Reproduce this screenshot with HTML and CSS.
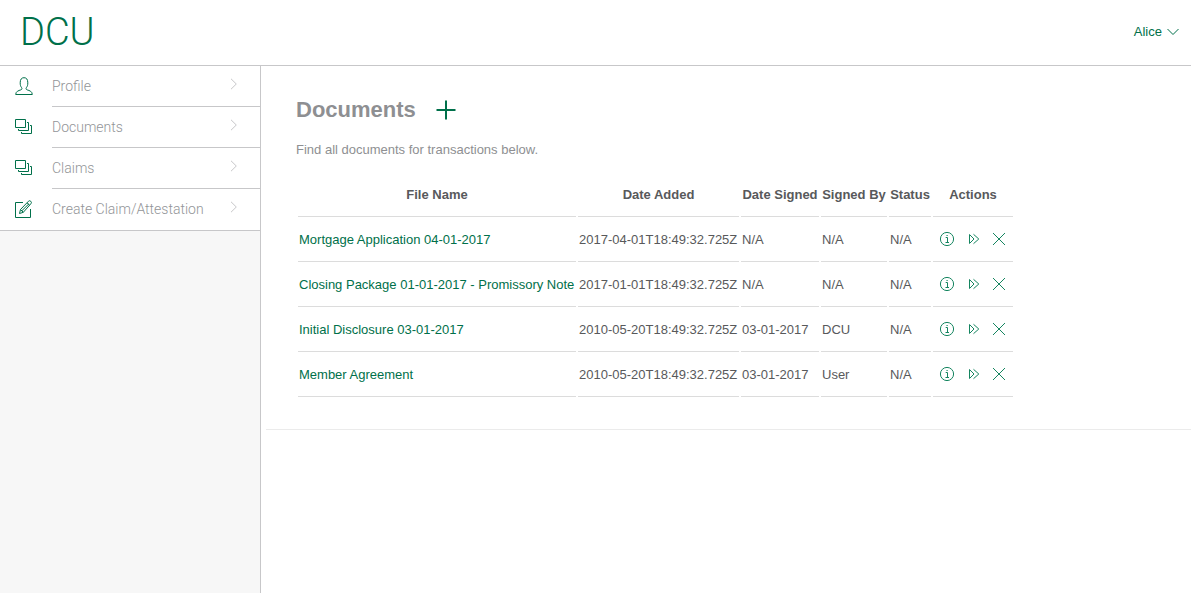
FILE: index.html
```html
<!DOCTYPE html>
<html lang="en">
<head>
<meta charset="utf-8">
<title>DCU - Documents</title>
<link rel="stylesheet" href="styles.css">
</head>
<body>
<svg class="sprite" aria-hidden="true">
  <symbol id="user" viewBox="0 0 18 18"><path d="M.7 17.500h16.600c0-3-2.800-4-5.100-4.600-1.400-.4-1.300-1.700-.8-2.300 1-1.200 1.400-2.500 1.400-4.800 0-3.300-1.200-5.100-3.800-5.100S5.200 2.500 5.200 5.800c0 2.300.4 3.600 1.400 4.800.5.600.6 1.900-.8 2.300-2.300.6-5.100 1.600-5.100 4.600z"/></symbol>
  <symbol id="stack" viewBox="0 0 18 18"><path d="M.5 1.500h10v8H.5zM12 4.500h1.500v8h-10V11M15 7.500h1.500v8h-10V14"/></symbol>
  <symbol id="compose" viewBox="0 0 18 18"><path d="M8 2.500H.5v15h15V9M4.500 13.500l1-4L13.500 1.200q1-1 2.300.1 1.200 1.200.1 2.400L8.300 12.300zM5.500 9.500l2.800 2.800M12 2.800l2.700 2.500M6.800 10.800L14 3.700"/></symbol>
  <symbol id="chevron" viewBox="0 0 8 12"><path d="M1 .8L6.300 6 1 11.200"/></symbol>
  <symbol id="down" viewBox="0 0 14 8"><path d="M1.500 1L7 6.500 12.500 1"/></symbol>
  <symbol id="info" viewBox="0 0 16 16"><circle cx="8" cy="8" r="6.600"/><path d="M6.700 6.500h1.800v5M6.500 11.500h3.500M7.500 4.500h1.200"/></symbol>
  <symbol id="forward" viewBox="0 0 12 12"><path d="M1.500 1.500v9L6 6zM5.500 1.300L10.800 6 5.500 10.700"/></symbol>
  <symbol id="close" viewBox="0 0 14 14"><path d="M1 1l12 12M13 1L1 13"/></symbol>
  <symbol id="plus" viewBox="0 0 20 20"><path d="M10 .5v19M.5 10h19"/></symbol>
</svg>

<header class="header">
  <a class="logo" href="#">DCU</a>
  <button class="account" type="button">Alice <svg class="icon-down"><use href="#down"/></svg></button>
</header>

<div class="layout">
  <aside class="sidebar">
    <nav class="menu">
      <a class="menu-item" href="#"><svg class="menu-icon"><use href="#user"/></svg><span class="menu-label">Profile<svg class="chevron"><use href="#chevron"/></svg></span></a>
      <a class="menu-item" href="#"><svg class="menu-icon"><use href="#stack"/></svg><span class="menu-label">Documents<svg class="chevron"><use href="#chevron"/></svg></span></a>
      <a class="menu-item" href="#"><svg class="menu-icon"><use href="#stack"/></svg><span class="menu-label">Claims<svg class="chevron"><use href="#chevron"/></svg></span></a>
      <a class="menu-item" href="#"><svg class="menu-icon"><use href="#compose"/></svg><span class="menu-label">Create Claim/Attestation<svg class="chevron"><use href="#chevron"/></svg></span></a>
    </nav>
  </aside>

  <main class="main">
    <section class="panel">
      <div class="title-row">
        <h1 class="title">Documents</h1>
        <button class="add" type="button" aria-label="Add document"><svg class="icon-plus"><use href="#plus"/></svg></button>
      </div>
      <p class="intro">Find all documents for transactions below.</p>
      <table class="documents">
        <colgroup><col class="col-name"><col class="col-added"><col class="col-signed"><col class="col-by"><col class="col-status"><col class="col-actions"></colgroup>
        <thead>
          <tr><th>File Name</th><th>Date Added</th><th>Date Signed</th><th>Signed By</th><th>Status</th><th>Actions</th></tr>
        </thead>
        <tbody>
          <tr>
            <td><a href="#">Mortgage Application 04-01-2017</a></td><td>2017-04-01T18:49:32.725Z</td><td>N/A</td><td>N/A</td><td>N/A</td>
            <td><div class="actions"><button type="button" aria-label="Info"><svg class="icon-info"><use href="#info"/></svg></button><button type="button" aria-label="Forward"><svg class="icon-forward"><use href="#forward"/></svg></button><button type="button" aria-label="Delete"><svg class="icon-close"><use href="#close"/></svg></button></div></td>
          </tr>
          <tr>
            <td><a href="#">Closing Package 01-01-2017 - Promissory Note</a></td><td>2017-01-01T18:49:32.725Z</td><td>N/A</td><td>N/A</td><td>N/A</td>
            <td><div class="actions"><button type="button" aria-label="Info"><svg class="icon-info"><use href="#info"/></svg></button><button type="button" aria-label="Forward"><svg class="icon-forward"><use href="#forward"/></svg></button><button type="button" aria-label="Delete"><svg class="icon-close"><use href="#close"/></svg></button></div></td>
          </tr>
          <tr>
            <td><a href="#">Initial Disclosure 03-01-2017</a></td><td>2010-05-20T18:49:32.725Z</td><td>03-01-2017</td><td>DCU</td><td>N/A</td>
            <td><div class="actions"><button type="button" aria-label="Info"><svg class="icon-info"><use href="#info"/></svg></button><button type="button" aria-label="Forward"><svg class="icon-forward"><use href="#forward"/></svg></button><button type="button" aria-label="Delete"><svg class="icon-close"><use href="#close"/></svg></button></div></td>
          </tr>
          <tr>
            <td><a href="#">Member Agreement</a></td><td>2010-05-20T18:49:32.725Z</td><td>03-01-2017</td><td>User</td><td>N/A</td>
            <td><div class="actions"><button type="button" aria-label="Info"><svg class="icon-info"><use href="#info"/></svg></button><button type="button" aria-label="Forward"><svg class="icon-forward"><use href="#forward"/></svg></button><button type="button" aria-label="Delete"><svg class="icon-close"><use href="#close"/></svg></button></div></td>
          </tr>
        </tbody>
      </table>
    </section>
  </main>
</div>
</body>
</html>
```

FILE: styles.css
```css
* {
  box-sizing: border-box;
}

body {
  margin: 0;
  min-height: 100vh;
  display: flex;
  flex-direction: column;
  background: #fff;
  color: #58595b;
  font: 13px/16px "Liberation Sans", Arial, sans-serif;
}

a {
  color: #00704a;
  text-decoration: none;
}

button {
  display: flex;
  align-items: center;
  padding: 0;
  border: 0;
  background: none;
  color: #00704a;
  font: inherit;
  cursor: pointer;
}

svg {
  flex: none;
  fill: none;
  stroke: currentColor;
}

.sprite {
  display: none;
}

.header {
  display: flex;
  justify-content: space-between;
  align-items: center;
  padding: 8px 11px 9px 20px;
  border-bottom: 1px solid #c7c7c9;
}

.logo {
  font: 300 38px/48px Roboto, "Liberation Sans", sans-serif;
}

.account {
  gap: 4px;
}

.icon-down {
  width: 14px;
  height: 8px;
}

.layout {
  flex: 1;
  display: flex;
}

.sidebar {
  flex: none;
  width: 261px;
  border-right: 1px solid #c7c7c9;
  background: #f7f7f7;
}

.menu {
  padding-bottom: 1px;
  border-bottom: 1px solid #c7c7c9;
  background: #fff;
}

.menu-item {
  display: flex;
  gap: 19px;
  padding-left: 15px;
  color: #939598;
  font: 300 14px/20px Roboto, "Liberation Sans", sans-serif;
}

.menu-icon {
  width: 18px;
  height: 18px;
  margin-top: 11px;
  color: #00704a;
}

.menu-label {
  flex: 1;
  display: flex;
  justify-content: space-between;
  padding: 10px 22px 10px 0;
  border-bottom: 1px solid #c7c7c9;
}

.menu-item:last-child .menu-label {
  border-bottom: 0;
}

.chevron {
  width: 8px;
  height: 12px;
  margin-top: 2px;
  color: #c7c7c9;
}

.main {
  flex: 1;
  min-width: 0;
  padding-left: 5px;
}

.panel {
  padding: 32px 30px 30px;
  border-bottom: 1px solid #ebebeb;
}

.title-row {
  display: flex;
  align-items: center;
  gap: 20px;
}

.title {
  margin: 0;
  color: #8e8f92;
  font-size: 22px;
  line-height: 24px;
}

.icon-plus {
  width: 20px;
  height: 20px;
  stroke-width: 2;
}

.intro {
  margin: 20px 0 14px;
  color: #8e8f92;
}

.documents {
  border-spacing: 2px;
  white-space: nowrap;
}

.documents th,
.documents td {
  height: 43px;
  padding: 1px;
  border-bottom: 1px solid #dcdcdc;
}

.col-name {
  width: 278px;
}

.col-added {
  width: 161px;
}

.col-signed {
  width: 78px;
}

.col-by {
  width: 66px;
}

.col-status {
  width: 42px;
}

.col-actions {
  width: 80px;
}

.actions {
  display: flex;
  justify-content: space-between;
  align-items: center;
  padding: 0 6px 2px 5px;
}

.actions button {
  color: #158560;
}

.icon-info {
  width: 16px;
  height: 16px;
}

.icon-forward {
  width: 12px;
  height: 12px;
}

.icon-close {
  width: 14px;
  height: 14px;
}
```
